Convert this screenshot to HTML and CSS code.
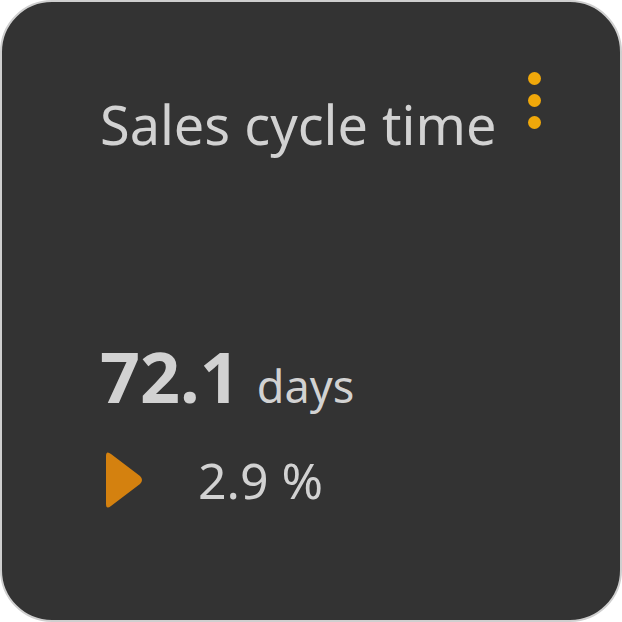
FILE: index.html
```html
<!DOCTYPE html>
<html>
<head>
<meta charset="utf-8">
<link rel="stylesheet" href="styles.css">
</head>
<body>
<div class="card">
  <div class="header">
    <h1 class="title">Sales cycle time</h1>
    <div class="menu"><span></span><span></span><span></span></div>
  </div>
  <div class="value"><span class="num">72.1</span><span class="unit">days</span></div>
  <div class="trend">
    <svg class="arrow" width="40" height="60" viewBox="0 0 40 60"><path d="M2 6 Q2 0 7 4 L36 26 Q40 30 36 34 L7 56 Q2 60 2 54 Z" fill="#d4810f"/></svg>
    <span class="pct">2.9 %</span>
  </div>
</div>
</body>
</html>
```
FILE: styles.css
```css
html, body { margin: 0; padding: 0; background: #fff; }
body { width: 622px; height: 622px; font-family: "Noto Sans", sans-serif; }
.card {
  box-sizing: border-box;
  width: 622px; height: 622px;
  background: #333333;
  border: 2px solid #cfcfcf;
  border-radius: 52px;
  padding: 68px 0 0 98px;
  color: #d2d2d2;
}
.header { display: flex; align-items: flex-start; }
.title { margin: 24px 0 0 0; font-size: 54px; font-weight: 400; line-height: 60px; width: 428px; letter-spacing: 0; }
.menu { display: flex; flex-direction: column; gap: 9px; padding-top: 2px; }
.menu span { width: 13px; height: 13px; border-radius: 50%; background: #f0a80a; }
.value { margin-top: 182px; display: flex; align-items: baseline; }
.num { font-size: 70px; font-weight: 700; line-height: 80px; }
.unit { font-size: 45px; margin-left: 17px; }
.trend { display: flex; align-items: center; margin-top: 30px; }
.arrow { margin-left: 4px; }
.pct { font-size: 50px; margin-left: 54px; }
```
